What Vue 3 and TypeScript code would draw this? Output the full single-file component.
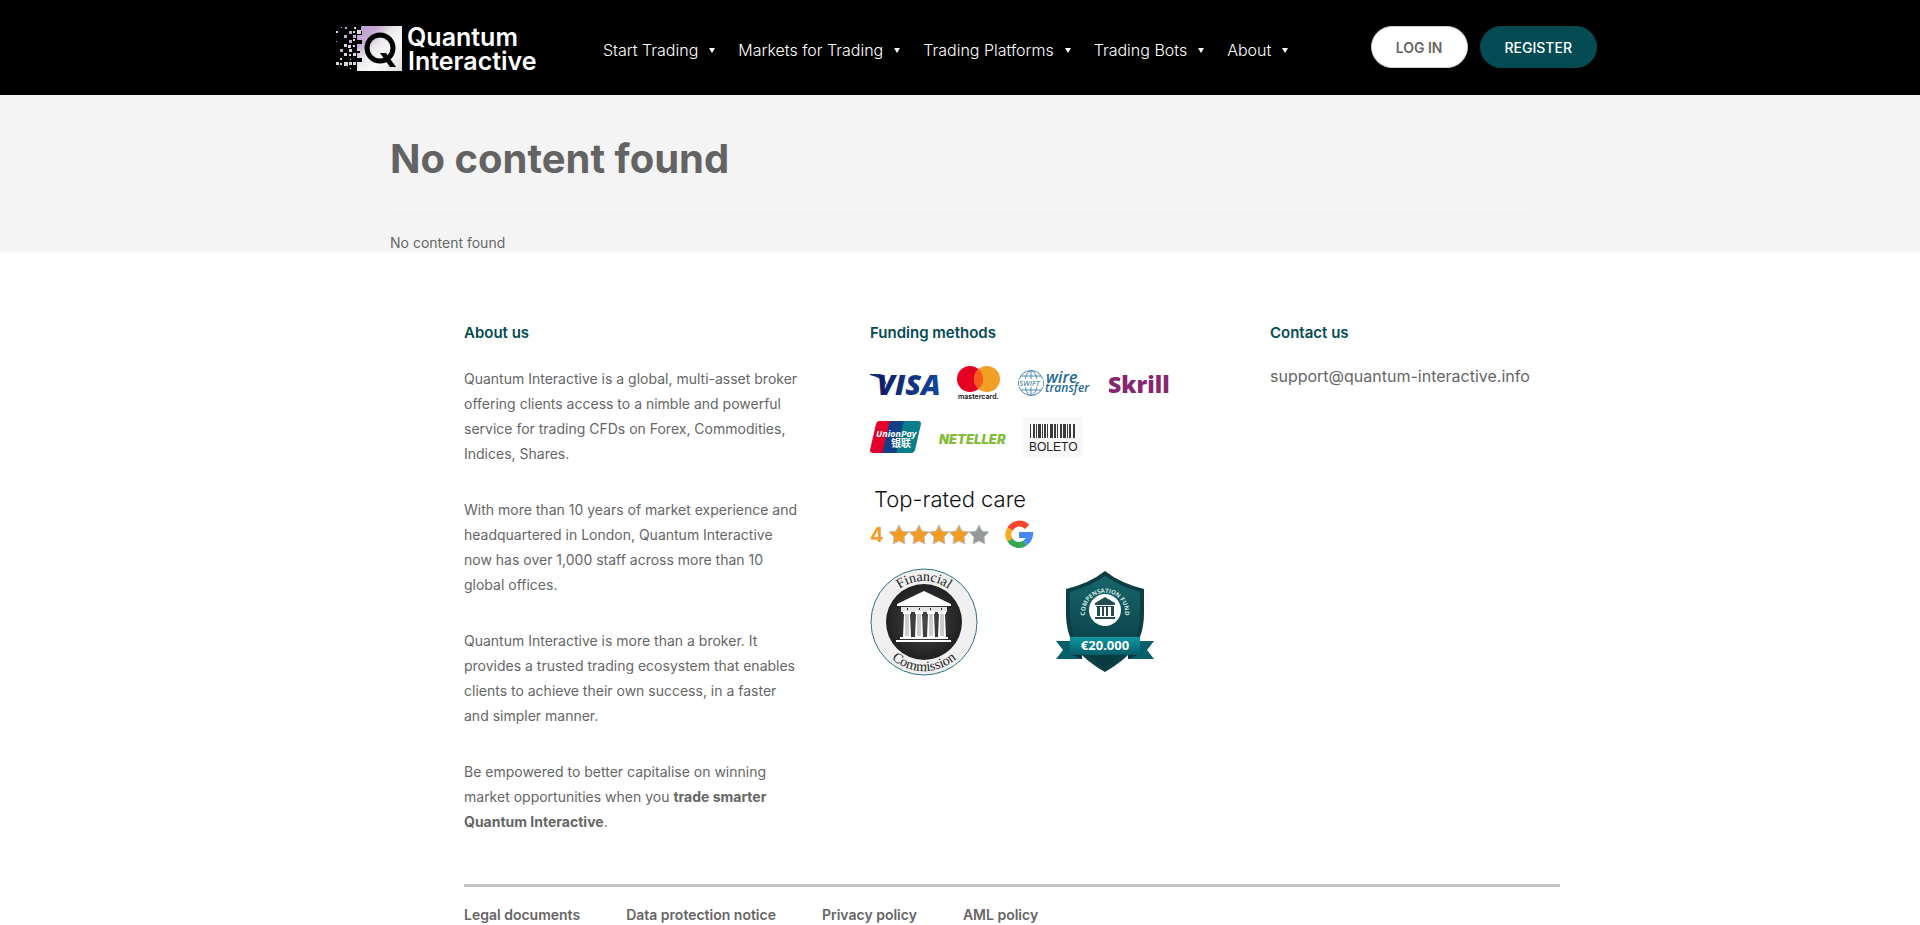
<script setup lang="ts">
interface Pixel { x: number; y: number; s: number; c: string }

const menu: string[] = ['Start Trading', 'Markets for Trading', 'Trading Platforms', 'Trading Bots', 'About']
const legal: string[] = ['Legal documents', 'Data protection notice', 'Privacy policy', 'AML policy']

const lilac = '#c9a9d6'
const pale = '#dcd3df'
const pixels: Pixel[] = [
  { x: 6, y: 1, s: 1, c: pale }, { x: 10, y: 1, s: 2, c: lilac }, { x: 19, y: 1, s: 2, c: pale },
  { x: 1, y: 5, s: 2, c: pale }, { x: 14, y: 5, s: 3, c: lilac }, { x: 18, y: 5, s: 2, c: pale }, { x: 22, y: 4, s: 4, c: pale },
  { x: 9, y: 9, s: 3, c: lilac }, { x: 18, y: 9, s: 3, c: lilac },
  { x: 1, y: 15, s: 1, c: lilac }, { x: 14, y: 14, s: 3, c: lilac }, { x: 18, y: 13, s: 2, c: pale },
  { x: 9, y: 18, s: 3, c: pale }, { x: 13, y: 19, s: 3, c: pale }, { x: 18, y: 19, s: 2, c: pale },
  { x: 5, y: 23, s: 3, c: lilac }, { x: 14, y: 23, s: 3, c: pale }, { x: 22, y: 22, s: 3, c: pale },
  { x: 9, y: 27, s: 3, c: pale }, { x: 14, y: 28, s: 2, c: pale }, { x: 18, y: 27, s: 3, c: pale },
  { x: 5, y: 32, s: 2, c: pale }, { x: 15, y: 33, s: 1, c: pale },
  { x: 1, y: 36, s: 3, c: pale }, { x: 9, y: 36, s: 4, c: pale }, { x: 14, y: 36, s: 3, c: pale }, { x: 18, y: 36, s: 3, c: pale },
  { x: 5, y: 37, s: 2, c: pale }, { x: 15, y: 42, s: 1, c: pale },
]

const bars: number[][] = [
  [0, 1], [3, 2], [6, 1], [8, 3], [12, 1], [14, 2], [17, 1], [20, 3], [24, 2],
  [27, 1], [30, 2], [33, 3], [37, 1], [39, 2], [43, 2],
]
const stars: number[] = [0, 1, 2, 3, 4]
</script>

<template>
  <div class="page">
    <header class="top">
      <div class="top-inner">
        <a href="#" class="brand" aria-label="Quantum Interactive">
          <svg width="202" height="46" viewBox="0 0 202 46">
            <defs>
              <linearGradient id="tile" x1="0" y1="0" x2="1" y2="1">
                <stop offset="0" stop-color="#bb9acb" />
                <stop offset="0.25" stop-color="#c7acd3" />
                <stop offset="0.42" stop-color="#e9e7ea" />
                <stop offset="0.65" stop-color="#fafafa" />
                <stop offset="1" stop-color="#dedede" />
              </linearGradient>
            </defs>
            <rect v-for="(p, i) in pixels" :key="i" :x="p.x" :y="p.y" :width="p.s" :height="p.s" :fill="p.c" />
            <path d="M26 0h41v45H22V36h5v-4h-5v-5h3v-4h-3v-5h5v-4h-5V9h5V5h-1z" fill="url(#tile)" />
            <circle cx="45" cy="22" r="13" fill="none" stroke="#000" stroke-width="5" />
            <path d="M45 27h6l10 14h-6z" fill="#000" />
            <text x="72" y="20" class="brand-text">Quantum</text>
            <text x="73" y="44" class="brand-text">Interactive</text>
          </svg>
        </a>
        <nav class="menu" aria-label="Main">
          <a v-for="item in menu" :key="item" href="#">{{ item }}<span class="caret"></span></a>
        </nav>
        <div class="actions">
          <button type="button" class="pill login">LOG IN</button>
          <button type="button" class="pill register">REGISTER</button>
        </div>
      </div>
    </header>

    <main class="notice">
      <div class="notice-inner">
        <h1>No content found</h1>
        <p>No content found</p>
      </div>
    </main>

    <footer class="foot">
      <div class="columns">
        <section class="about">
          <h2>About us</h2>
          <p>Quantum Interactive is a global, multi-asset broker offering clients access to a nimble and powerful service for trading CFDs on Forex, Commodities, Indices, Shares.</p>
          <p>With more than 10 years of market experience and headquartered in London, Quantum Interactive now has over 1,000 staff across more than 10 global offices.</p>
          <p>Quantum Interactive is more than a broker. It provides a trusted trading ecosystem that enables clients to achieve their own success, in a faster and simpler manner.</p>
          <p>Be empowered to better capitalise on winning market opportunities when you <strong>trade smarter Quantum Interactive</strong>.</p>
        </section>

        <section class="funding">
          <h2>Funding methods</h2>
          <div class="methods">
            <svg width="69" height="40" viewBox="0 0 69 40" role="img" aria-label="Visa">
              <defs>
                <linearGradient id="visa" x1="0" x2="1">
                  <stop offset="0" stop-color="#101c62" />
                  <stop offset="1" stop-color="#0f479b" />
                </linearGradient>
              </defs>
              <path d="M0 9h9q4 0 5 3l3 9Q11 12 0 10z" fill="url(#visa)" />
              <text x="7" y="30" class="visa" fill="url(#visa)">VISA</text>
            </svg>
            <svg width="43" height="40" viewBox="0 0 43 40" role="img" aria-label="Mastercard">
              <circle cx="13" cy="14" r="13" fill="#e60023" />
              <circle cx="30" cy="14" r="13" fill="#f29f25" />
              <path d="M21.500 4a13 13 0 0 1 0 20a13 13 0 0 1 0-20z" fill="#f85a1e" />
              <text x="1" y="34" class="master">mastercard.</text>
            </svg>
            <svg width="72" height="40" viewBox="0 0 72 40" role="img" aria-label="Swift wire transfer">
              <g fill="none" stroke="#4d8bb0" stroke-width="1">
                <circle cx="13" cy="18" r="12.500" />
                <ellipse cx="13" cy="18" rx="6" ry="12.500" />
                <path d="M13 5v26M3 11h20M3 25h20M0 18h26" />
              </g>
              <rect x="1" y="14" width="24" height="8" fill="#fff" />
              <text x="1" y="21" class="swift">SWIFT</text>
              <text x="28" y="18" class="wire">wire</text>
              <text x="27" y="27" class="transfer">transfer</text>
            </svg>
            <svg width="60" height="40" viewBox="0 0 60 40" role="img" aria-label="Skrill">
              <text x="0" y="28" class="skrill">Skrill</text>
            </svg>
            <svg width="51" height="40" viewBox="0 0 51 40" role="img" aria-label="UnionPay">
              <path d="M9 4h14l-8 32H3q-3 0-3-3L6 7q1-3 3-3z" fill="#e4002b" />
              <path d="M22 4h15l-8 32H14q-2 0-1-3l6-26q1-3 3-3z" fill="#123f86" />
              <path d="M35 4h13q3 0 3 3l-6 26q-1 3-3 3H28q-2 0-1-3l6-26q1-3 2-3z" fill="#087e8b" />
              <text x="6" y="20" class="union">UnionPay</text>
              <text x="21" y="30" class="union-cn">银联</text>
            </svg>
            <svg width="65" height="40" viewBox="0 0 65 40" role="img" aria-label="Neteller">
              <text x="0" y="27" class="neteller">NETELLER</text>
            </svg>
            <svg width="61" height="40" viewBox="0 0 61 40" role="img" aria-label="Boleto">
              <rect width="61" height="40" rx="1" fill="#f8f8f8" />
              <rect v-for="b in bars" :key="b[0]" :x="b[0] + 8" y="7" :width="b[1]" height="14" fill="#3a3a3a" />
              <text x="7" y="34" class="boleto">BOLETO</text>
            </svg>
          </div>

          <p class="care">Top-rated care</p>
          <div class="rating">
            <svg width="165" height="30" viewBox="0 0 165 30" role="img" aria-label="4 out of 5 stars on Google">
              <text x="0" y="22" class="score">4</text>
              <g v-for="n in stars" :key="n" :transform="`translate(${20 + n * 20} 5)`">
                <path d="M9 0l3 6 7 1-5 5 1 7-6-3-6 3 1-7-5-5 7-1z" :fill="n < 4 ? '#f39c24' : '#969999'" stroke="#bfc0c4" stroke-width="1" stroke-linejoin="round" />
              </g>
              <g fill="none" stroke-width="6">
                <path d="M140 9A10.500 10.500 0 0 1 157 7" stroke="#f9452d" />
                <path d="M140 20A10.500 10.500 0 0 1 140 9" stroke="#f9a825" />
                <path d="M155 23A10.500 10.500 0 0 1 140 20" stroke="#36a852" />
                <path d="M149 15h11A11 11 0 0 1 155 23" stroke="#4688f4" />
              </g>
            </svg>
          </div>

          <div class="badges">
            <svg width="108" height="108" viewBox="0 0 108 108" role="img" aria-label="Financial Commission">
              <defs>
                <path id="arc-up" d="M13 54a41 41 0 0 1 82 0" />
                <path id="arc-down" d="M5 54a49 49 0 0 0 98 0" />
                <radialGradient id="disc">
                  <stop offset="0" stop-color="#4b4b4b" />
                  <stop offset="1" stop-color="#202020" />
                </radialGradient>
              </defs>
              <circle cx="54" cy="54" r="53" fill="#f0f0f1" stroke="#2c7187" stroke-width="1" />
              <circle cx="54" cy="54" r="38" fill="url(#disc)" />
              <g fill="#fff">
                <path d="M27 36l27-13 27 13v2H27z" />
                <path d="M31 39h46v5H31z" fill="#e4e4e4" />
                <path d="M33 43h8v3h-1l1 23h-8l1-23h-1zM45 43h8v3h-1l1 23h-8l1-23h-1zM57 43h8v3h-1l1 23h-8l1-23h-1zM68 43h8v3h-1l1 23h-8l1-23h-1z" />
                <path d="M30 69h48v2H30zM26 72h55v2H26z" />
              </g>
              <path d="M36 46v22M38 46v22M48 46v22M50 46v22M60 46v22M62 46v22M71 46v22M73 46v22" stroke="#999" stroke-width="1" />
              <path d="M37 40h1v2h-1zM49 40h1v2h-1zM60 40h1v2h-1zM71 40h1v2h-1z" fill="#222" />
              <text class="seal"><textPath href="#arc-up" startOffset="50%" text-anchor="middle">Financial</textPath></text>
              <text class="seal"><textPath href="#arc-down" startOffset="50%" text-anchor="middle">Commission</textPath></text>
            </svg>
            <svg width="98" height="102" viewBox="0 0 98 102" role="img" aria-label="Compensation fund €20.000">
              <defs>
                <path id="arc-fund" d="M30 48a20 20 0 1 1 38 0" />
                <linearGradient id="shield" x1="0" y1="0" x2="0" y2="1">
                  <stop offset="0" stop-color="#17666b" />
                  <stop offset="1" stop-color="#06373e" />
                </linearGradient>
                <linearGradient id="ribbon" x1="0" y1="0" x2="0" y2="1">
                  <stop offset="0" stop-color="#0c98a4" />
                  <stop offset="1" stop-color="#075d67" />
                </linearGradient>
              </defs>
              <path d="M49 0Q64 12 88 18V42C88 72 74 86 49 101C24 86 10 72 10 42V18Q34 12 49 0z" fill="#0c3f45" />
              <path d="M49 5Q65 16 84 21V42C84 68 72 82 49 96C26 82 14 68 14 42V21Q33 16 49 5z" fill="url(#shield)" />
              <circle cx="49" cy="39" r="16" fill="#fff" />
              <path d="M39 32l10-6 10 6v2H39zM40 35h18v1H40zM41 36h3v9h-3zM46 36h2v9h-2zM50 36h2v9h-2zM55 36h3v9h-3zM39 46h20v2H39z" fill="#244d52" />
              <text class="fund"><textPath href="#arc-fund" startOffset="50%" text-anchor="middle">COMPENSATION FUND</textPath></text>
              <path d="M0 70h26v18H0l7-9zM98 70H72v18h26l-7-9z" fill="#075f69" />
              <path d="M14 83h12v5zM84 83H72v5z" fill="#05333a" />
              <rect x="14" y="66" width="70" height="18" fill="url(#ribbon)" />
              <text x="49" y="79" text-anchor="middle" class="amount">€20.000</text>
            </svg>
          </div>
        </section>

        <section class="contact">
          <h2>Contact us</h2>
          <a href="mailto:support@quantum-interactive.info">support@quantum-interactive.info</a>
        </section>
      </div>
      <nav class="legal" aria-label="Legal">
        <a v-for="item in legal" :key="item" href="#">{{ item }}</a>
      </nav>
    </footer>
  </div>
</template>

<style>
body {
  margin: 0;
  background: #fff;
}
</style>

<style scoped>
.page {
  font-family: Inter, "Liberation Sans", sans-serif;
  font-size: 14px;
  color: #666;
}
a {
  color: inherit;
  text-decoration: none;
}
svg {
  display: block;
  flex: none;
  overflow: visible;
}
h1, h2, p {
  margin: 0;
}
.top {
  background: #000;
}
.top-inner {
  box-sizing: border-box;
  max-width: 1290px;
  margin: 0 auto;
  padding: 26px 8px 21px 20px;
  display: flex;
  align-items: flex-start;
}
.brand-text {
  font-size: 25px;
  font-weight: 600;
  fill: #fff;
}
.menu {
  display: flex;
  gap: 19px;
  margin-left: 66px;
  line-height: 48px;
  font-size: 16px;
  font-weight: 300;
  color: #fff;
  white-space: nowrap;
}
.menu a {
  display: flex;
  align-items: center;
}
.caret {
  margin: 0 4px 0 11px;
  border: 3px solid transparent;
  border-top: 5px solid #fff;
  border-bottom: 0;
}
.actions {
  display: flex;
  gap: 12px;
  margin-left: auto;
}
.pill {
  height: 42px;
  padding: 0 24px;
  border: 1px solid #044b53;
  border-radius: 21px;
  font-family: inherit;
  font-size: 14px;
  white-space: nowrap;
}
.login {
  background: #fff;
  border-color: #ccc;
  color: #666;
  font-weight: 600;
}
.register {
  background: #044b53;
  color: #fff;
  font-weight: 500;
}
.notice {
  background: #f4f4f4;
}
.notice-inner {
  max-width: 1140px;
  margin: 0 auto;
  padding-top: 39px;
}
h1 {
  padding-bottom: 30px;
  border-bottom: 1px solid #eee;
  font-size: 40px;
  line-height: 50px;
  font-weight: 700;
  color: #636363;
}
.notice p {
  padding-top: 19px;
  line-height: 18px;
}
.foot {
  box-sizing: border-box;
  max-width: 1200px;
  margin: 0 auto;
  padding: 71px 0 0 104px;
}
.columns {
  display: grid;
  grid-template-columns: 338px 332px 1fr;
  column-gap: 68px;
}
h2 {
  font-size: 15px;
  line-height: 20px;
  font-weight: 600;
  color: #044b53;
}
.about h2 {
  margin-bottom: 23px;
}
.about p {
  line-height: 25px;
  margin-bottom: 31px;
}
.methods {
  display: flex;
  flex-wrap: wrap;
  gap: 12px 18px;
  margin-top: 22px;
}
.care {
  margin: 28px 0 0 4px;
  font-size: 22px;
  line-height: 28px;
  font-weight: 300;
  color: #111;
}
.rating {
  margin-top: 7px;
}
.badges {
  display: flex;
  align-items: center;
  gap: 78px;
  margin-top: 18px;
}
.contact a {
  display: block;
  margin-top: 21px;
  font-size: 16px;
  line-height: 24px;
}
.legal {
  display: flex;
  gap: 46px;
  margin-top: 19px;
  padding-top: 18px;
  border-top: 3px solid #c6c6c6;
  line-height: 20px;
  font-weight: 600;
  white-space: nowrap;
}
.visa {
  font: italic 800 29px "Open Sans", sans-serif;
}
.master {
  font-size: 7px;
  font-weight: 600;
  fill: #111;
}
.swift {
  font: italic 400 8px "Open Sans", sans-serif;
  fill: #2d6d94;
}
.wire {
  font: italic 600 16px "Open Sans", sans-serif;
  fill: #236a93;
}
.transfer {
  font: italic 600 12px "Open Sans", sans-serif;
  fill: #236a93;
}
.skrill {
  font: 800 23px "Open Sans", sans-serif;
  fill: #862671;
}
.union {
  font: italic 700 9px "Open Sans", sans-serif;
  fill: #fff;
}
.union-cn {
  font: 700 10px "Noto Sans CJK SC", sans-serif;
  fill: #fff;
}
.neteller {
  font: italic 900 13px Inter, sans-serif;
  fill: #85bc3c;
}
.boleto {
  font: 12px "Liberation Sans", sans-serif;
  fill: #222;
}
.score {
  font-size: 20px;
  font-weight: 700;
  fill: #f39c24;
}
.seal {
  font: 14px "Liberation Serif", serif;
  fill: #222;
}
.fund {
  font: 700 6px "Open Sans", sans-serif;
  fill: #d9e8e8;
}
.amount {
  font: 700 13px "Noto Sans", sans-serif;
  fill: #fff;
}
</style>
